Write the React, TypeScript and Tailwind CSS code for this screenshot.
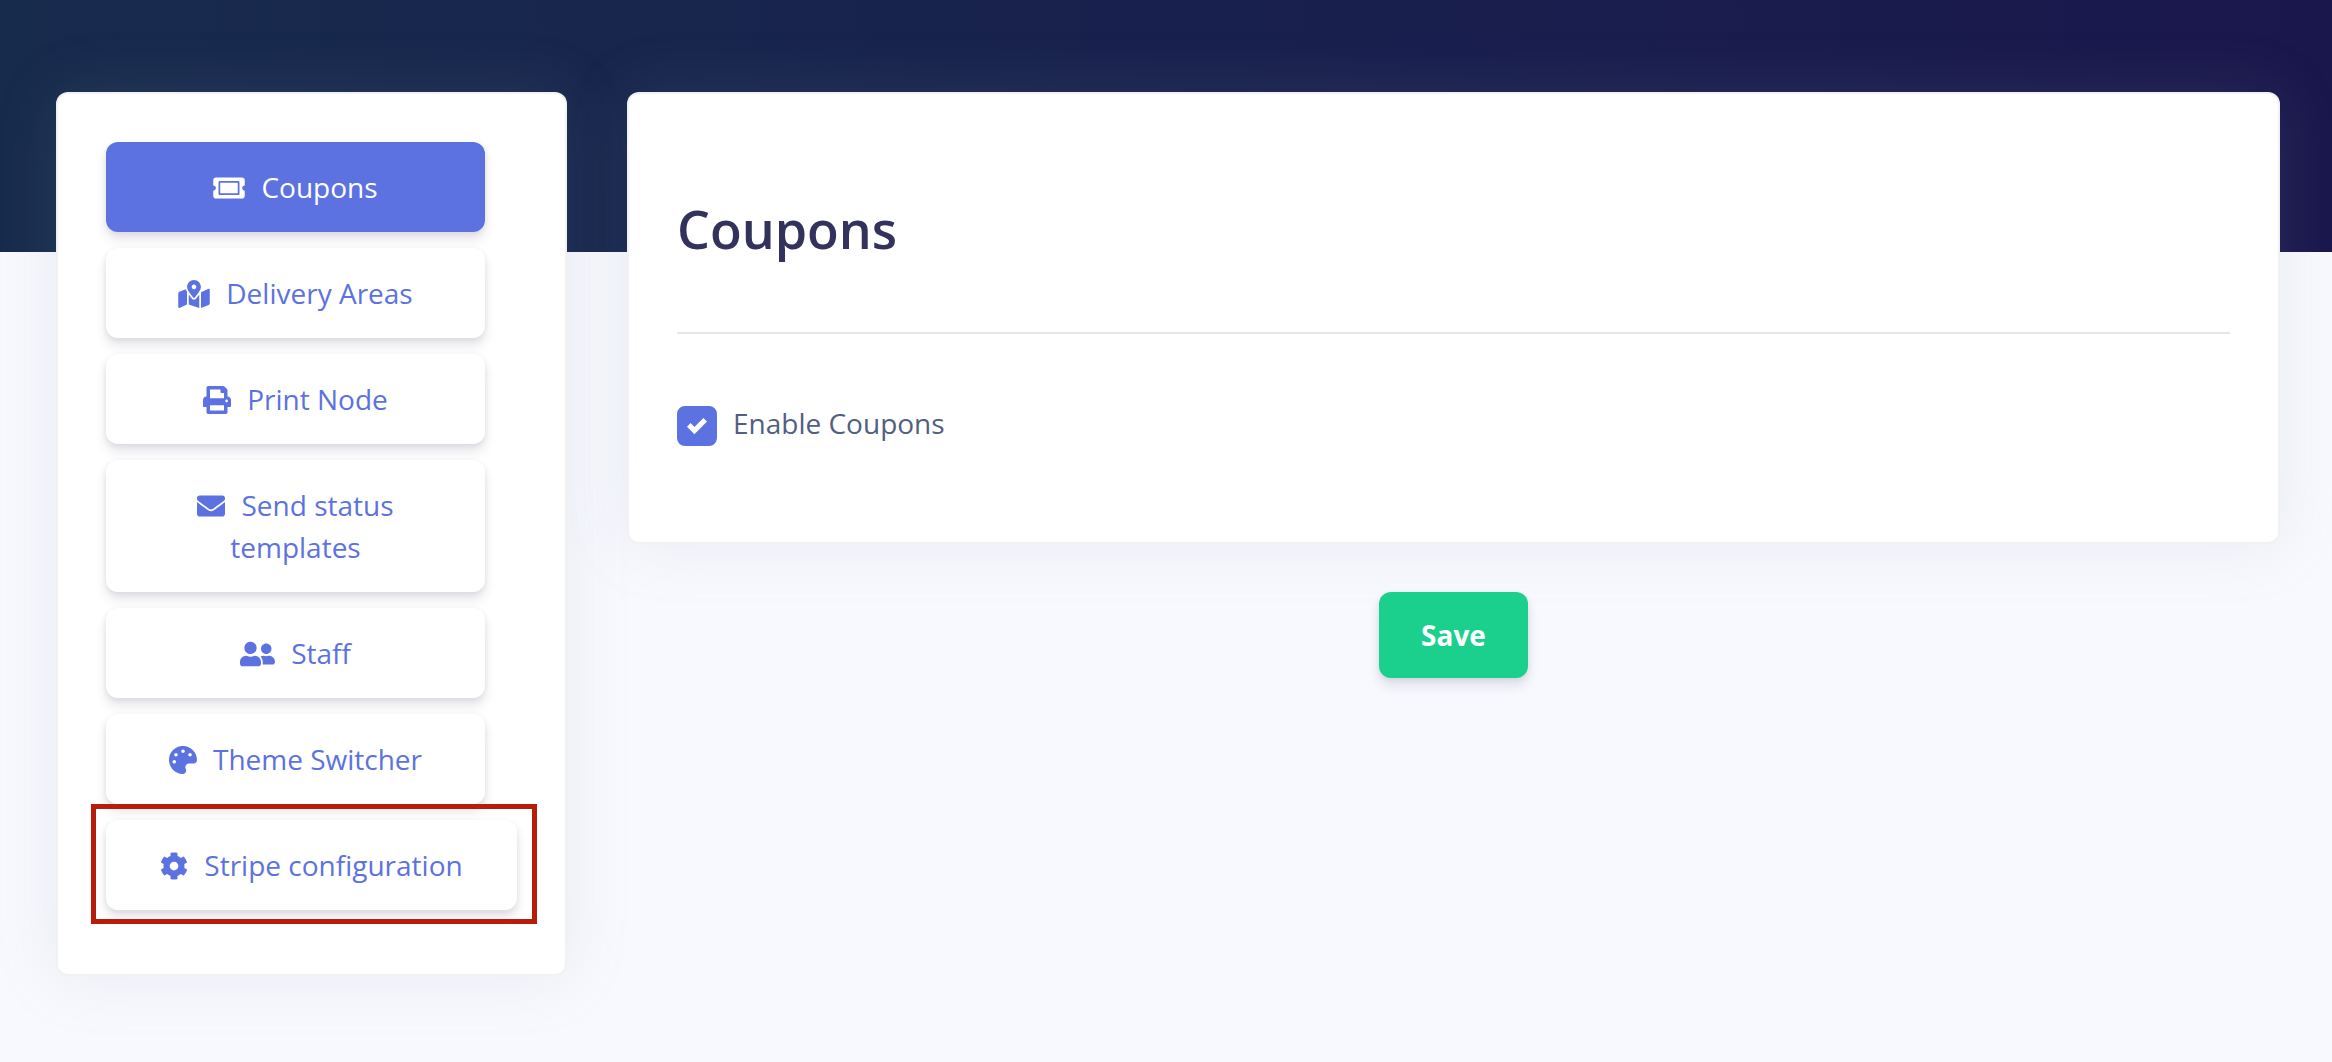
import { useState } from "react";
import type { IconType } from "react-icons";
import {
  FaCog,
  FaEnvelope,
  FaMapMarkedAlt,
  FaPalette,
  FaPrint,
  FaTicketAlt,
  FaUserFriends,
} from "react-icons/fa";
import clsx from "clsx";

interface SettingsTab {
  id: string;
  label: string;
  icon: IconType;
  iconWidth: string;
  highlighted?: boolean;
}

// The icons share one height but not one aspect ratio
const tabs: SettingsTab[] = [
  { id: "coupons", label: "Coupons", icon: FaTicketAlt, iconWidth: "w-8" },
  { id: "delivery", label: "Delivery Areas", icon: FaMapMarkedAlt, iconWidth: "w-8" },
  { id: "printnode", label: "Print Node", icon: FaPrint, iconWidth: "w-7" },
  { id: "templates", label: "Send status templates", icon: FaEnvelope, iconWidth: "w-7" },
  { id: "staff", label: "Staff", icon: FaUserFriends, iconWidth: "w-[35px]" },
  { id: "theme", label: "Theme Switcher", icon: FaPalette, iconWidth: "w-7" },
  { id: "stripe", label: "Stripe configuration", icon: FaCog, iconWidth: "w-7", highlighted: true },
];

const TabLink = ({ tab, active }: { tab: SettingsTab; active: boolean }) => {
  const Icon = tab.icon;

  return (
    <a
      href={`#${tab.id}`}
      aria-current={active ? "page" : undefined}
      className={clsx(
        "block rounded-xl px-8 py-6 text-center text-[28px] leading-[42px]",
        "shadow-[0_8px_12px_rgba(50,50,93,0.11),0_2px_6px_rgba(0,0,0,0.08)]",
        active ? "bg-[#5c72e0] text-white" : "bg-white text-[#5c72e0]"
      )}
    >
      <Icon className={clsx("mr-4 inline-block h-7 align-[-4px]", tab.iconWidth)} />
      {tab.label}
    </a>
  );
};

const Sidebar = () => (
  <nav className="rounded-xl border-2 border-black/5 bg-white px-12 pt-12 pb-16 shadow-[0_0_64px_rgba(136,152,170,0.15)]">
    <ul className="space-y-4">
      {tabs.map((tab, index) => (
        <li key={tab.id} className={clsx("relative", index < tabs.length - 1 && "pr-8")}>
          <TabLink tab={tab} active={index === 0} />
          {tab.highlighted && (
            <div className="pointer-events-none absolute -top-4 -right-5 -bottom-3.5 -left-[15px] border-5 border-[#b81c0a]" />
          )}
        </li>
      ))}
    </ul>
  </nav>
);

const CouponsPanel = () => {
  const [enabled, setEnabled] = useState(true);

  return (
    <form className="col-span-3" onSubmit={(e) => e.preventDefault()}>
      <div className="rounded-xl border-2 border-black/5 bg-white px-12 py-24 shadow-[0_0_64px_rgba(136,152,170,0.15)]">
        <h1 className="text-[52px] leading-[78px] font-semibold text-[#32325d]">Coupons</h1>
        <hr className="mt-16 border-t-2 border-[#e6e6e6]" />
        <div className="flex items-start gap-4 pt-[68px]">
          <div className="relative mt-1 size-10">
            <input
              id="enable-coupons"
              type="checkbox"
              checked={enabled}
              onChange={(e) => setEnabled(e.target.checked)}
              className="block size-10 appearance-none rounded-lg border-2 border-[#5c72e0] bg-white checked:bg-[#5c72e0]"
            />
            {enabled && (
              <svg viewBox="0 0 8 8" className="pointer-events-none absolute inset-2.5 size-5 fill-white">
                <path d="M6.564.75l-3.59 3.612-1.538-1.55L0 4.26 2.974 7.25 8 2.193z" />
              </svg>
            )}
          </div>
          <label htmlFor="enable-coupons" className="text-[28px] leading-[42px] text-[#525f7f]">
            Enable Coupons
          </label>
        </div>
      </div>
      <div className="pt-12 text-center">
        <button
          type="submit"
          className="rounded-xl bg-[#1bcf8d] px-[42px] py-[22px] text-[28px] leading-[42px] font-bold text-white shadow-[0_8px_12px_rgba(50,50,93,0.11),0_2px_6px_rgba(0,0,0,0.08)]"
        >
          Save
        </button>
      </div>
    </form>
  );
};

const App = () => (
  <div className="min-h-screen bg-[#f8f9fe] font-['Open_Sans',sans-serif]">
    <header className="h-[252px] bg-[linear-gradient(87deg,#172b4d_0%,#1a174d_100%)]" />
    <main className="relative -mt-40 grid grid-cols-4 items-start gap-[60px] pr-[52px] pl-14">
      <Sidebar />
      <CouponsPanel />
    </main>
  </div>
);

export default App;
